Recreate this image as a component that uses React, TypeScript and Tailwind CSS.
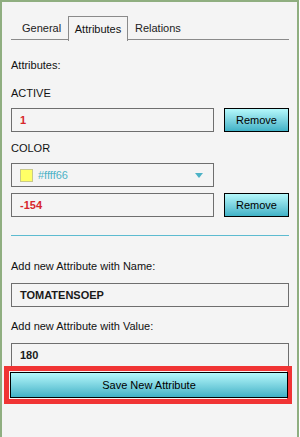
const font = { fontFamily: '"Liberation Sans", Arial, sans-serif' }

const btn =
  'border border-black bg-gradient-to-b from-[#b4f8fb] to-[#3fb2c7] text-[11px] text-black'

const Input = ({ value, red = false }: { value: string; red?: boolean }) => (
  <div
    className={`h-[24px] border border-[#6e6e6e] bg-[#f4f4f4] pl-[8px] flex items-center text-[11px] font-bold ${
      red ? 'text-[#d7262b]' : 'text-[#1a1a1a]'
    }`}
  >
    {value}
  </div>
)

export default function App() {
  return (
    <div style={font} className="w-[300px] h-[437px] bg-white">
      <div className="w-[299px] h-[437px] border-2 border-b-0 border-[#8fae80] bg-[#f4f4f4] pl-[9px] pr-[8px] pt-[14px] text-[11px] leading-[14px] text-[#111]">
        {/* Tabs */}
        <div className="flex h-[24px] border-b border-[#8a8a8a]">
          <div className="w-[57px] pl-[11px] flex items-center text-[#222]">General</div>
          <div className="w-[60px] h-[25px] border border-b-0 border-[#8a8a8a] bg-[#f4f4f4] flex items-center justify-center">
            Attributes
          </div>
          <div className="pl-[7px] flex items-center text-[#222]">Relations</div>
        </div>

        <div className="mt-[18px]">Attributes:</div>

        <div className="mt-[14px]">ACTIVE</div>
        <div className="mt-[8px] flex gap-[10px]">
          <div className="w-[203px]">
            <Input value="1" red />
          </div>
          <button className={`${btn} w-[65px] h-[24px]`}>Remove</button>
        </div>

        <div className="mt-[9px]">COLOR</div>
        <div className="mt-[8px] w-[203px] h-[24px] border border-[#6e6e6e] flex items-center pl-[8px] pr-[10px]">
          <span className="w-[13px] h-[13px] bg-[#ffff66] border border-[#c9c98a]" />
          <span className="ml-[5px] text-[#4cb2c6]">#ffff66</span>
          <svg className="ml-auto" width="8" height="5" viewBox="0 0 8 5">
            <path d="M0 0 H8 L4 5 Z" fill="#4cb2c6" />
          </svg>
        </div>
        <div className="mt-[6px] flex gap-[10px]">
          <div className="w-[203px]">
            <Input value="-154" red />
          </div>
          <button className={`${btn} w-[65px] h-[24px]`}>Remove</button>
        </div>

        <div className="mt-[18px] h-px bg-[#5cbbd0]" />

        <div className="mt-[23px]">Add new Attribute with Name:</div>
        <div className="mt-[10px]">
          <Input value="TOMATENSOEP" />
        </div>

        <div className="mt-[12px]">Add new Attribute with Value:</div>
        <div className="mt-[10px]">
          <Input value="180" />
        </div>

        <div className="relative mt-[5px] -ml-[1px] mr-[1px]">
          <div className="absolute -left-[6px] -right-[4px] -top-[6px] -bottom-[6px] border-[5px] border-[#f03434]" />
          <button className={`${btn} relative w-full h-[26px]`}>Save New Attribute</button>
        </div>
      </div>
    </div>
  )
}
